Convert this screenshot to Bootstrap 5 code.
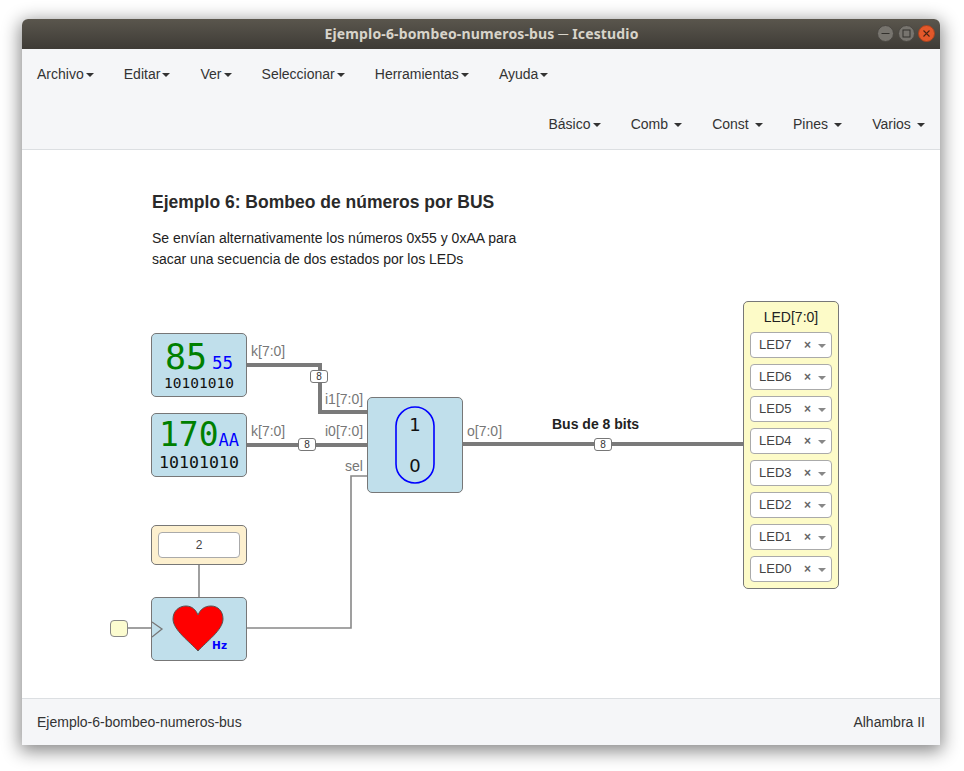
<!DOCTYPE html>
<html lang="es">
<head>
  <meta charset="UTF-8">
  <title>Ejemplo-6-bombeo-numeros-bus — Icestudio</title>
  <link href="https://cdn.jsdelivr.net/npm/bootstrap@5.3.3/dist/css/bootstrap.min.css" rel="stylesheet">
  <style>
    html, body { height: 100%; }
    body { background: #fff; font-family: "Liberation Sans", Arial, sans-serif; font-size: 14px; color: #333; overflow: hidden; }
    #appWindow { width: 918px; height: 726px; margin: 19px 0 0 22px; box-shadow: 0 4px 18px 2px rgba(0,0,0,.48); border-radius: 6px 6px 0 0; }
    #titleBar { height: 30px; flex: none; background: linear-gradient(#5a564d, #3e3b36); border-radius: 6px 6px 0 0; color: #d8d4ca; font-family: "Noto Sans", sans-serif; font-weight: 700; font-size: 14px; letter-spacing: .15px; line-height: 30px; padding-left: 1px; }
    #winBtns { right: 5px; top: 6px; gap: 3.5px; }
    .win-btn { width: 17px; height: 17px; display: block; }
    #mainMenu { height: 101px; flex: none; background: #f5f6f8; border-bottom: 1px solid #dcdfe2; }
    .menu-row { height: 50px; }
    .menu-row .nav-link { padding: 15px; color: #333; font-size: 14px; line-height: 20px; }
    .menu-row .dropdown-toggle::after { margin-left: 2.1px; border-top-width: 4px; border-left-width: 4px; border-right-width: 4px; vertical-align: 2px; }
    .menu-row.spaced .dropdown-toggle.wide::after { margin-left: 6.2px; }
    #canvasArea { background: #fff; }
    #wires { left: 0; top: 0; }
    #docTitle { left: 130px; top: 42px; font-weight: 700; font-size: 17.5px; line-height: 21px; color: #2a2a2a; }
    #docText { left: 130px; top: 78px; line-height: 21px; color: #222; font-size: 14px; white-space: nowrap; }
    .ice-block { position: absolute; width: 96px; background: #c0dfeb; border: 1px solid #777; border-radius: 5px; }
    #const85 { left: 129px; top: 183px; height: 64px; }
    #const170 { left: 129px; top: 263px; height: 64px; }
    #heartBlock { left: 129px; top: 447px; height: 64px; }
    #muxBlock { left: 345px; top: 247px; height: 96px; }
    #constTwo { left: 129px; top: 375px; height: 40px; background: #fdf0cf; padding: 6px; }
    #constInput { height: 26px; background: #fff; border: 1px solid #aaa; border-radius: 4px; font-size: 12px; line-height: 24px; text-align: center; color: #444; }
    #clockPin { left: 88px; top: 470px; width: 18px; height: 17px; background: #fcfcd0; border: 1px solid #888; border-radius: 4px; }
    .num-mono { font-family: "DejaVu Sans Mono", monospace; white-space: nowrap; }
    .num-dec { color: #008000; }
    .num-hex { color: #00f; }
    .num-bin { color: #111; margin-top: -7px; }
    #const85 .num-dec { font-size: 35px; line-height: 38px; }
    #const85 .num-hex { font-size: 17.5px; margin-left: 5px; line-height: 38px; }
    #const85 .num-bin { font-size: 14.5px; line-height: 16px; }
    #const85 .num-top { padding-top: 4px; }
    #const170 .num-dec { font-size: 33px; line-height: 38px; }
    #const170 .num-hex { font-size: 17px; line-height: 38px; }
    #const170 .num-bin { font-size: 16.6px; line-height: 18px; margin-top: -5px; }
    #const170 .num-top { padding-top: 2px; }
    #muxShape { left: 27px; top: 8px; width: 40px; height: 78px; font-family: "DejaVu Sans", sans-serif; font-size: 18px; color: #111; padding: 5px 0; }
    #hzText { right: 19px; top: 41px; font-family: "DejaVu Sans", sans-serif; font-weight: 700; font-size: 10.5px; line-height: 12px; color: #00f; }
    .port-label { position: absolute; color: #777; line-height: 16px; white-space: nowrap; }
    #lblK1 { left: 229px; top: 193px; }
    #lblI1 { left: 303px; top: 241px; }
    #lblK2 { left: 229px; top: 273px; }
    #lblI0 { left: 303px; top: 273px; }
    #lblSel { left: 323px; top: 308px; }
    #lblO { left: 445px; top: 273px; }
    #lblBus { left: 530px; top: 266px; color: #222; font-weight: 700; }
    .bus-size { position: absolute; width: 18px; height: 13px; background: #fff; border: 1px solid #777; border-radius: 3px; font-size: 10px; line-height: 11px; text-align: center; color: #333; }
    #size1 { left: 288px; top: 220px; }
    #size2 { left: 276px; top: 288px; }
    #size3 { left: 572px; top: 288px; }
    #ledBlock { position: absolute; left: 721px; top: 151px; width: 96px; height: 288px; background: #fdfbc8; border: 1px solid #777; border-radius: 5px; padding: 0 6px; }
    #ledTitle { text-align: center; line-height: 20px; padding-top: 5px; height: 30px; color: #222; }
    .led-select { height: 26px; background: #fff; border: 1px solid #aaa; border-radius: 4px; padding-left: 8px; font-size: 13px; color: #444; margin-bottom: 6px; }
    .led-clear { font-size: 12px; font-weight: 700; color: #666; margin-left: auto; margin-right: 7px; line-height: 14px; }
    .led-caret { width: 0; height: 0; border: 4px solid transparent; border-top-color: #888; border-bottom-width: 0; margin-right: 5px; margin-top: 2px; }
    #statusBar { height: 47px; flex: none; background: #f5f6f8; border-top: 1px solid #dcdfe2; padding: 0 15px; line-height: 46px; color: #333; }
  </style>
</head>
<body>

  <div id="appWindow" class="d-flex flex-column">
    <!-- Title bar -->
    <div id="titleBar" class="position-relative text-center">
      Ejemplo-6-bombeo-numeros-bus ─ Icestudio
      <div id="winBtns" class="position-absolute d-flex">
        <svg class="win-btn" viewBox="0 0 17 17"><circle cx="8.5" cy="8.5" r="8" fill="#77746e" stroke="#4a4742"/><path d="M4.5 8.5h8" stroke="#33312d" stroke-width="1"/></svg>
        <svg class="win-btn" viewBox="0 0 17 17"><circle cx="8.5" cy="8.5" r="8" fill="#77746e" stroke="#4a4742"/><rect x="5" y="5" width="7" height="7" fill="none" stroke="#33312d"/></svg>
        <svg class="win-btn" viewBox="0 0 17 17"><circle cx="8.5" cy="8.5" r="8" fill="#e4582a" stroke="#a8431f"/><path d="M5.5 5.5l6 6M11.5 5.5l-6 6" stroke="#4a2413" stroke-width="1.1"/></svg>
      </div>
    </div>

    <!-- Menu -->
    <nav id="mainMenu">
      <ul class="nav menu-row px-0">
        <li class="nav-item"><a class="nav-link dropdown-toggle" href="#">Archivo</a></li>
        <li class="nav-item"><a class="nav-link dropdown-toggle" href="#">Editar</a></li>
        <li class="nav-item"><a class="nav-link dropdown-toggle" href="#">Ver</a></li>
        <li class="nav-item"><a class="nav-link dropdown-toggle" href="#">Seleccionar</a></li>
        <li class="nav-item"><a class="nav-link dropdown-toggle" href="#">Herramientas</a></li>
        <li class="nav-item"><a class="nav-link dropdown-toggle" href="#">Ayuda</a></li>
      </ul>
      <ul class="nav menu-row spaced justify-content-end">
        <li class="nav-item"><a class="nav-link dropdown-toggle" href="#">Básico</a></li>
        <li class="nav-item"><a class="nav-link dropdown-toggle wide" href="#">Comb</a></li>
        <li class="nav-item"><a class="nav-link dropdown-toggle wide" href="#">Const</a></li>
        <li class="nav-item"><a class="nav-link dropdown-toggle wide" href="#">Pines</a></li>
        <li class="nav-item"><a class="nav-link dropdown-toggle wide" href="#">Varios</a></li>
      </ul>
    </nav>

    <!-- Diagram -->
    <div id="canvasArea" class="flex-grow-1 position-relative">
      <svg id="wires" class="position-absolute" width="918" height="548" viewBox="0 0 918 548">
        <g fill="none" stroke="#7a7a7a">
          <path d="M225 215H298V262H345" stroke-width="4"/>
          <path d="M225 295H345" stroke-width="4"/>
          <path d="M441 294H721" stroke-width="4"/>
        </g>
        <g fill="none" stroke="#888" stroke-width="1.6">
          <path d="M345 326H329V478H225"/>
          <path d="M177 415V447"/>
          <path d="M106 478H129"/>
        </g>
      </svg>

      <div id="docTitle" class="position-absolute">Ejemplo 6: Bombeo de números por BUS</div>
      <div id="docText" class="position-absolute">Se envían alternativamente los números 0x55 y 0xAA para<br>sacar una secuencia de dos estados por los LEDs</div>

      <div id="const85" class="ice-block num-mono text-center">
        <div class="num-top"><span class="num-dec">85</span><span class="num-hex">55</span></div>
        <div class="num-bin">10101010</div>
      </div>
      <div id="const170" class="ice-block num-mono text-center">
        <div class="num-top"><span class="num-dec">170</span><span class="num-hex">AA</span></div>
        <div class="num-bin">10101010</div>
      </div>

      <div id="constTwo" class="ice-block"><div id="constInput">2</div></div>

      <div id="clockPin" class="position-absolute"></div>
      <div id="heartBlock" class="ice-block">
        <svg class="position-absolute top-0 start-0" width="94" height="62" viewBox="0 0 94 62">
          <path d="M0 24L10 31L0 39" fill="none" stroke="#777" stroke-width="1.3"/>
          <path d="M46 53C38 44 21 32 21 21C21 13 27 8 34 8C40 8 44 12 46 17C48 12 52 8 59 8C66 8 71 13 71 21C71 32 54 44 46 53Z" fill="#f00" stroke="#555"/>
        </svg>
        <div id="hzText" class="position-absolute">Hz</div>
      </div>

      <div id="muxBlock" class="ice-block">
        <svg class="position-absolute top-0 start-0" width="94" height="94" viewBox="0 0 94 94">
          <rect x="28" y="9" width="38" height="76" rx="19" fill="none" stroke="#00f" stroke-width="1.6"/>
        </svg>
        <div id="muxShape" class="position-absolute d-flex flex-column justify-content-between align-items-center">
          <span>1</span>
          <span>0</span>
        </div>
      </div>

      <span id="lblK1" class="port-label">k[7:0]</span>
      <span id="lblI1" class="port-label">i1[7:0]</span>
      <span id="lblK2" class="port-label">k[7:0]</span>
      <span id="lblI0" class="port-label">i0[7:0]</span>
      <span id="lblSel" class="port-label">sel</span>
      <span id="lblO" class="port-label">o[7:0]</span>
      <span id="lblBus" class="port-label">Bus de 8 bits</span>

      <div id="size1" class="bus-size">8</div>
      <div id="size2" class="bus-size">8</div>
      <div id="size3" class="bus-size">8</div>

      <div id="ledBlock">
        <div id="ledTitle">LED[7:0]</div>
        <div class="led-select d-flex align-items-center">LED7<span class="led-clear">×</span><span class="led-caret"></span></div>
        <div class="led-select d-flex align-items-center">LED6<span class="led-clear">×</span><span class="led-caret"></span></div>
        <div class="led-select d-flex align-items-center">LED5<span class="led-clear">×</span><span class="led-caret"></span></div>
        <div class="led-select d-flex align-items-center">LED4<span class="led-clear">×</span><span class="led-caret"></span></div>
        <div class="led-select d-flex align-items-center">LED3<span class="led-clear">×</span><span class="led-caret"></span></div>
        <div class="led-select d-flex align-items-center">LED2<span class="led-clear">×</span><span class="led-caret"></span></div>
        <div class="led-select d-flex align-items-center">LED1<span class="led-clear">×</span><span class="led-caret"></span></div>
        <div class="led-select d-flex align-items-center">LED0<span class="led-clear">×</span><span class="led-caret"></span></div>
      </div>
    </div>

    <!-- Status bar -->
    <div id="statusBar" class="d-flex justify-content-between">
      <span>Ejemplo-6-bombeo-numeros-bus</span>
      <span>Alhambra II</span>
    </div>
  </div>

  <script src="https://cdn.jsdelivr.net/npm/bootstrap@5.3.3/dist/js/bootstrap.bundle.min.js"></script>
</body>
</html>
